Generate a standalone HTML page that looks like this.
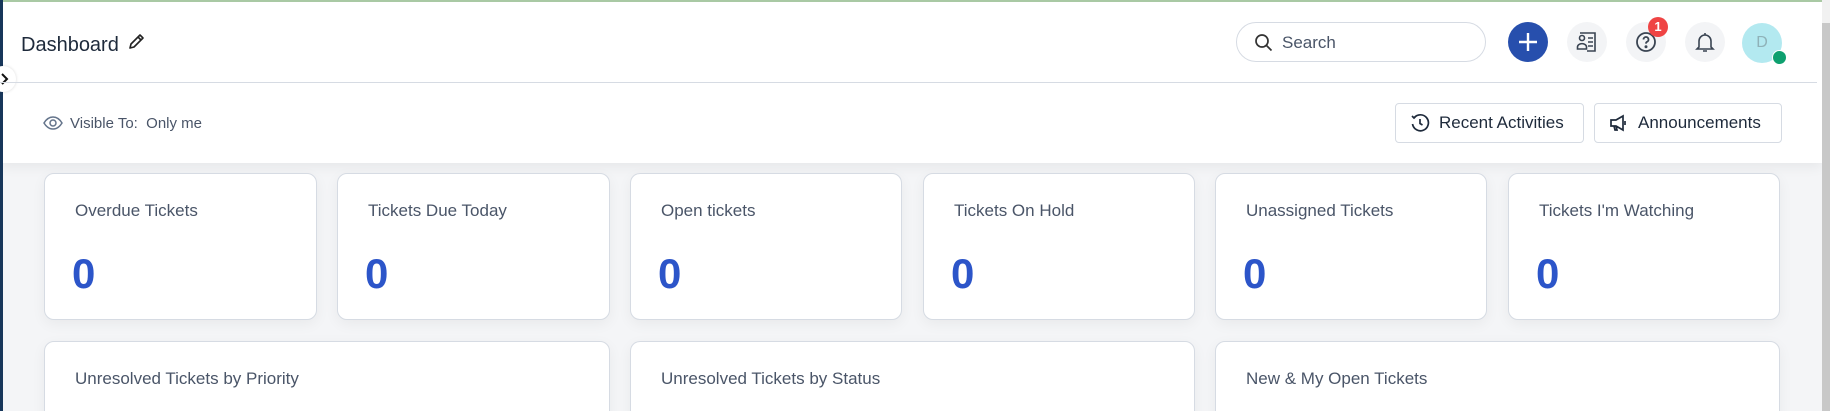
<!DOCTYPE html>
<html><head><meta charset="utf-8"><style>
*{box-sizing:border-box;margin:0;padding:0}
html,body{width:1830px;height:411px;overflow:hidden}
body{background:#f4f5f7;font-family:"Liberation Sans",sans-serif;position:relative}
.abs{position:absolute}
.header{left:0;top:0;width:1822px;height:163px;background:#fff;box-shadow:0 4px 12px rgba(0,0,0,.06)}
.card{position:absolute;background:#fff;border:1px solid #d6dbe3;border-radius:10px;box-shadow:0 4px 14px rgba(0,0,0,.05)}
.card .t{position:absolute;left:30px;top:27px;font-size:17px;color:#4a5568}
.card .n{position:absolute;left:27px;top:76px;font-size:42px;font-weight:bold;color:#2c55c9}
.ic{position:absolute;width:40px;height:40px;border-radius:50%;background:#f3f4f6;top:22px}
.btn{position:absolute;top:103px;height:40px;border:1px solid #d6dbe3;border-radius:4px;font-size:17px;color:#1e2a3b;display:flex;align-items:center;padding-left:14px}
</style></head><body>
<div class="abs header"></div>
<div class="abs" style="left:0;top:0;width:1830px;height:2px;background:#a9c9a4"></div>
<div class="abs" style="left:0;top:0;width:3px;height:411px;background:#17365a"></div>
<div class="abs" style="left:-10px;top:66px;width:26px;height:26px;border-radius:50%;background:#fff;box-shadow:0 0 3px rgba(0,0,0,.15)"></div>
<svg class="abs" style="left:0;top:72px" width="10" height="14"><path d="M2 2l5 5-5 5" stroke="#111" stroke-width="2" fill="none"/></svg>
<div class="abs" style="left:21px;top:34px;font-size:20px;color:#1e2a3b">Dashboard</div>
<svg class="abs" style="left:127px;top:33px" width="18" height="18" viewBox="0 0 18 18"><path d="M3 15l1-4 9-9 3 3-9 9z M11 4l3 3" stroke="#222" stroke-width="1.6" fill="none" stroke-linejoin="round"/></svg>
<div class="abs" style="left:0;top:82px;width:1817px;height:1px;background:#d6dbe3"></div>
<svg class="abs" style="left:43px;top:115px" width="20" height="16" viewBox="0 0 20 16"><path d="M1 8c3-5 6-6 9-6s6 1 9 6c-3 5-6 6-9 6s-6-1-9-6z" stroke="#64748b" stroke-width="1.5" fill="none"/><circle cx="10" cy="8" r="3" stroke="#64748b" stroke-width="1.5" fill="none"/></svg>
<div class="abs" style="left:70px;top:115px;font-size:15px;color:#4a5568">Visible To:&nbsp; Only me</div>
<div class="abs" style="left:1236px;top:22px;width:250px;height:40px;border:1px solid #d6dbe3;border-radius:20px"></div>
<svg class="abs" style="left:1254px;top:33px" width="19" height="19" viewBox="0 0 19 19"><circle cx="8" cy="8" r="6" stroke="#333" stroke-width="1.7" fill="none"/><path d="M12.5 12.5l5 5" stroke="#333" stroke-width="1.7"/></svg>
<div class="abs" style="left:1282px;top:33px;font-size:17px;color:#4a5568">Search</div>
<div class="abs" style="left:1508px;top:22px;width:40px;height:40px;border-radius:50%;background:#274fad"></div>
<svg class="abs" style="left:1516px;top:30px" width="24" height="24"><path d="M12 3v18M3 12h18" stroke="#fff" stroke-width="2.4"/></svg>
<div class="ic" style="left:1567px"></div>
<svg class="abs" style="left:1575px;top:30px" width="24" height="24" viewBox="0 0 24 24" fill="none" stroke="#3a4452" stroke-width="1.6"><circle cx="7" cy="8" r="2.5"/><path d="M2.5 19v-2a4 3 0 0 1 9 0v2z"/><path d="M5 3h15v18H12M13 8h5M13 12h5M13 16h5"/></svg>
<div class="ic" style="left:1626px"></div>
<svg class="abs" style="left:1634px;top:30px" width="24" height="24" viewBox="0 0 24 24" fill="none" stroke="#3a4452" stroke-width="1.8"><circle cx="12" cy="12" r="9"/><path d="M9.5 9.5a2.5 2.5 0 1 1 3.5 2.3c-.8.4-1 1-1 1.8"/><circle cx="12" cy="16.8" r=".6" fill="#3a4452"/></svg>
<div class="abs" style="left:1648px;top:17px;width:20px;height:20px;border-radius:50%;background:#ef4444;color:#fff;font-size:13px;font-weight:bold;text-align:center;line-height:20px">1</div>
<div class="ic" style="left:1685px"></div>
<svg class="abs" style="left:1693px;top:30px" width="24" height="24" viewBox="0 0 24 24" fill="none" stroke="#3a4452" stroke-width="1.6"><path d="M6 17V11a6 6 0 0 1 12 0v6l2 2H4z M10 21h4 M12 3v2"/></svg>
<div class="abs" style="left:1742px;top:23px;width:40px;height:40px;border-radius:50%;background:#b3e9f0;color:#8fb2b8;font-size:16px;text-align:center;line-height:40px">D</div>
<div class="abs" style="left:1772px;top:50px;width:15px;height:15px;border-radius:50%;background:#0ea06f;border:1px solid #fff"></div>
<div class="btn" style="left:1395px;width:189px"><svg width="20" height="20" viewBox="0 0 20 20" fill="none" stroke="#1e2a3b" stroke-width="1.7" style="margin-right:9px"><path d="M4 5a8 8 0 1 1-1.5 6"/><path d="M2 3l2 2 2-2"/><path d="M10 6v4.5l2.5 1.5"/></svg>Recent Activities</div>
<div class="btn" style="left:1594px;width:188px"><svg width="20" height="20" viewBox="0 0 20 20" fill="none" stroke="#1e2a3b" stroke-width="1.7" style="margin-right:9px"><path d="M2 7h5l7-4v14l-7-4H2z M5 13l1 4h2l-1-4 M16 8v4"/></svg>Announcements</div>
<div class="abs" style="left:1822px;top:0;width:8px;height:411px;background:#f1f1f1"></div>
<div class="abs" style="left:1822px;top:23px;width:8px;height:388px;background:#c8c8c8"></div>
<div class="card" style="left:44px;top:173px;width:273px;height:147px"><div class="t">Overdue Tickets</div><div class="n">0</div></div>
<div class="card" style="left:337px;top:173px;width:273px;height:147px"><div class="t">Tickets Due Today</div><div class="n">0</div></div>
<div class="card" style="left:630px;top:173px;width:272px;height:147px"><div class="t">Open tickets</div><div class="n">0</div></div>
<div class="card" style="left:923px;top:173px;width:272px;height:147px"><div class="t">Tickets On Hold</div><div class="n">0</div></div>
<div class="card" style="left:1215px;top:173px;width:272px;height:147px"><div class="t">Unassigned Tickets</div><div class="n">0</div></div>
<div class="card" style="left:1508px;top:173px;width:272px;height:147px"><div class="t">Tickets I'm Watching</div><div class="n">0</div></div>
<div class="card" style="left:44px;top:341px;width:566px;height:80px"><div class="t">Unresolved Tickets by Priority</div></div>
<div class="card" style="left:630px;top:341px;width:565px;height:80px"><div class="t">Unresolved Tickets by Status</div></div>
<div class="card" style="left:1215px;top:341px;width:565px;height:80px"><div class="t">New &amp; My Open Tickets</div></div>
</body></html>
